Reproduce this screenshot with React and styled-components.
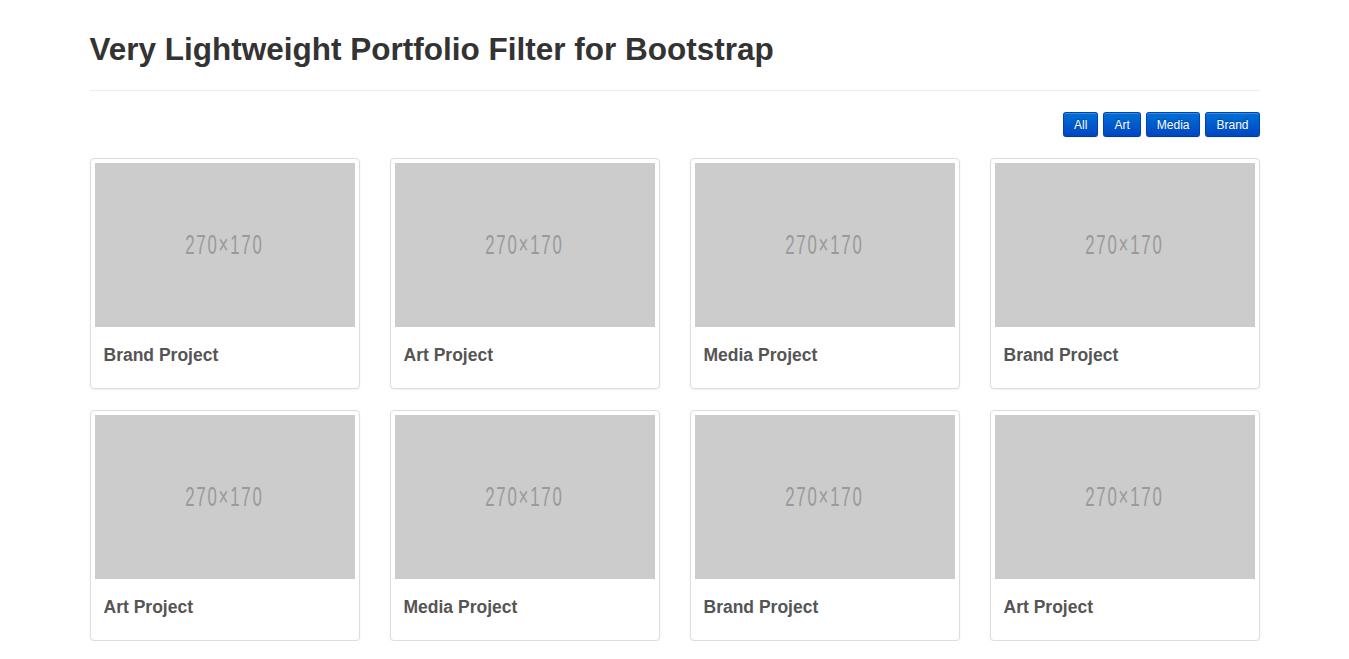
import React from 'react';
import styled, { createGlobalStyle } from 'styled-components';

const GlobalStyle = createGlobalStyle`
    body {
        margin: 0;
        background: #fff;
        font-family: "Liberation Sans", Arial, sans-serif;
        color: #333;
    }
`;

const Container = styled.div`
    width: 1170px;
    margin: 0 auto;
    padding-top: 32px;
`;

const PageHeader = styled.div`
    border-bottom: 1px solid #eee;
    padding-bottom: 24px;

    h1 {
        margin: 0;
        font-size: 31.5px;
        line-height: 34px;
        font-weight: bold;
        color: #333;
    }
`;

const FilterBar = styled.div`
    display: flex;
    justify-content: flex-end;
    gap: 5px;
    margin: 21px 0;
`;

const FilterButton = styled.button`
    height: 25px;
    padding: 0 10px;
    font-family: "Liberation Sans", Arial, sans-serif;
    font-size: 12px;
    color: #fff;
    text-shadow: 0 -1px 0 rgba(0, 0, 0, 0.25);
    background: linear-gradient(to bottom, #0070d4, #0046c2);
    border: 1px solid #0044b4;
    border-bottom-color: #003a9a;
    border-radius: 3px;
    box-shadow: inset 0 1px 0 rgba(255, 255, 255, 0.2), 0 1px 2px rgba(0, 0, 0, 0.05);
    cursor: pointer;
`;

const Grid = styled.div`
    display: grid;
    grid-template-columns: repeat(4, 270px);
    column-gap: 30px;
    row-gap: 21px;
`;

const Thumbnail = styled.div`
    box-sizing: border-box;
    width: 270px;
    padding: 4px;
    border: 1px solid #ddd;
    border-radius: 4px;
    box-shadow: 0 1px 3px rgba(0, 0, 0, 0.055);
    background: #fff;
`;

const Placeholder = styled.div`
    height: 164px;
    background: #ccc;
    display: flex;
    align-items: center;
    justify-content: center;

    span {
        display: inline-block;
        color: #9a9a9a;
        font-family: "Liberation Sans", Arial, sans-serif;
        font-size: 28px;
        line-height: 1;
        letter-spacing: 3px;
        transform: scaleX(0.6);
    }
`;

const Caption = styled.div`
    padding: 9px;

    h3 {
        margin: 10px 0 10px;
        font-size: 17.5px;
        line-height: 19px;
        font-weight: bold;
        color: #555;
    }
`;

const filters = ['All', 'Art', 'Media', 'Brand'];

const projects = [
    'Brand', 'Art', 'Media', 'Brand',
    'Art', 'Media', 'Brand', 'Art',
];

const App = () => {
    return (
        <>
            <GlobalStyle />
            <Container>
                <PageHeader>
                    <h1>Very Lightweight Portfolio Filter for Bootstrap</h1>
                </PageHeader>
                <FilterBar>
                    {filters.map((f) => (
                        <FilterButton key={f}>{f}</FilterButton>
                    ))}
                </FilterBar>
                <Grid>
                    {projects.map((p, i) => (
                        <Thumbnail key={i}>
                            <Placeholder><span>270×170</span></Placeholder>
                            <Caption>
                                <h3>{p} Project</h3>
                            </Caption>
                        </Thumbnail>
                    ))}
                </Grid>
            </Container>
        </>
    );
};

export default App;
